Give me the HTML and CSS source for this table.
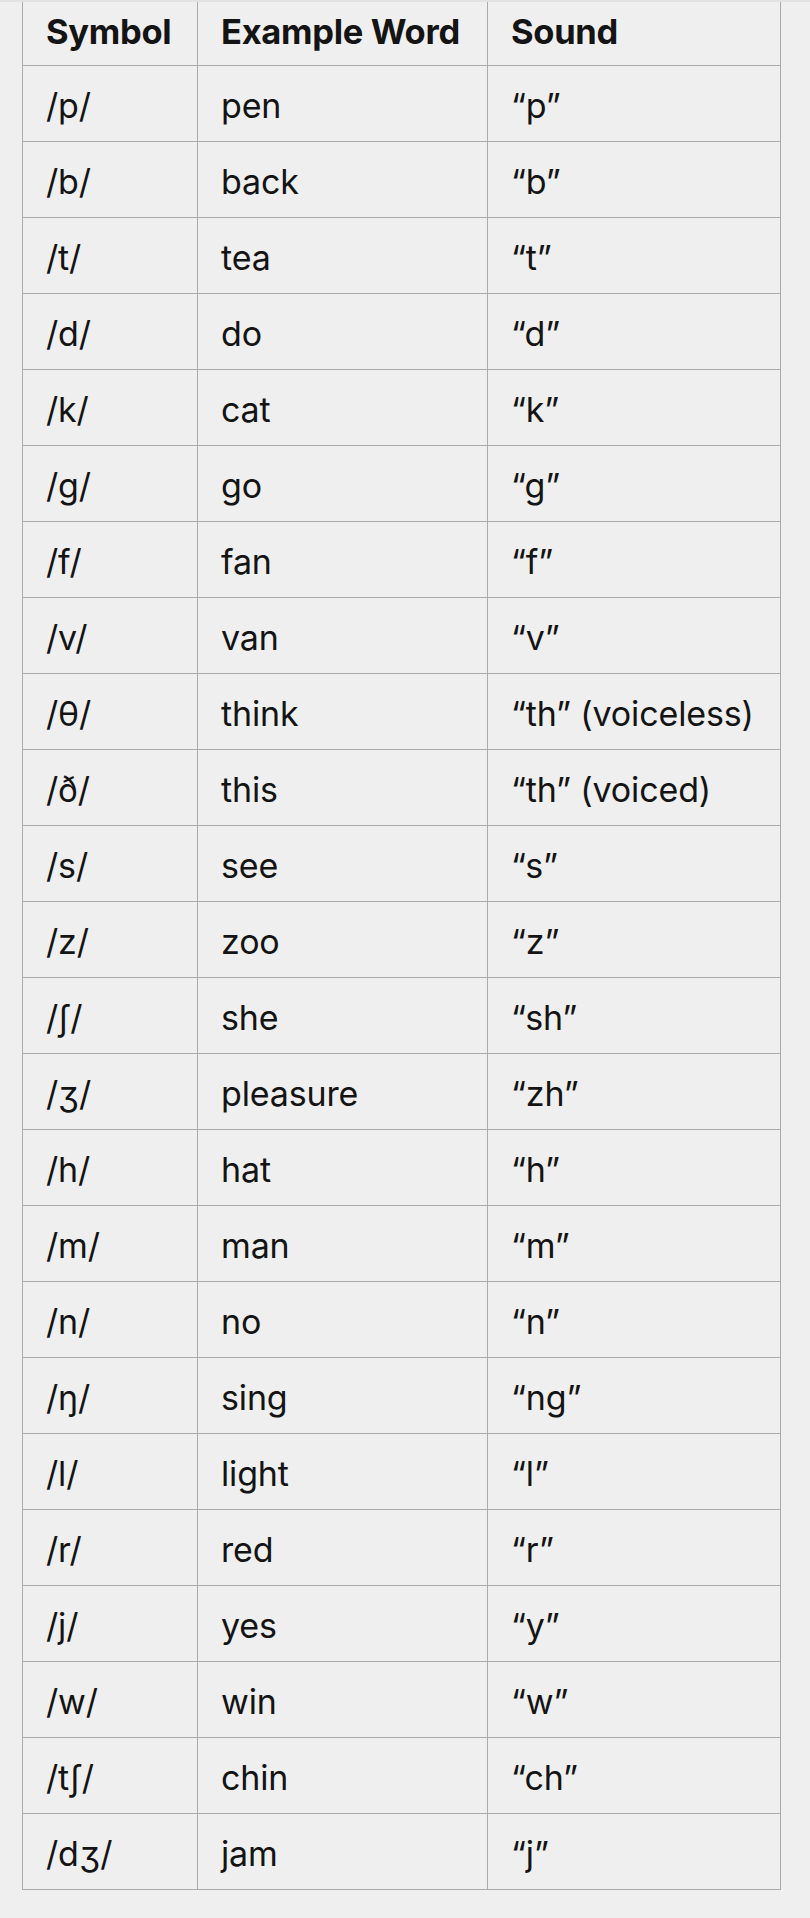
FILE: index.html
```html
<!DOCTYPE html>
<html lang="en">
<head>
<meta charset="utf-8">
<title>Consonant Sounds</title>
<link rel="stylesheet" href="styles.css">
</head>
<body>
<div class="page">
<table class="ipa">
<colgroup><col class="c1"><col class="c2"><col class="c3"></colgroup>
<thead>
<tr><th>Symbol</th><th>Example Word</th><th>Sound</th></tr>
</thead>
<tbody>
<tr><td>/p/</td><td>pen</td><td>“p”</td></tr>
<tr><td>/b/</td><td>back</td><td>“b”</td></tr>
<tr><td>/t/</td><td>tea</td><td>“t”</td></tr>
<tr><td>/d/</td><td>do</td><td>“d”</td></tr>
<tr><td>/k/</td><td>cat</td><td>“k”</td></tr>
<tr><td>/g/</td><td>go</td><td>“g”</td></tr>
<tr><td>/f/</td><td>fan</td><td>“f”</td></tr>
<tr><td>/v/</td><td>van</td><td>“v”</td></tr>
<tr><td>/θ/</td><td>think</td><td>“th” (voiceless)</td></tr>
<tr><td>/ð/</td><td>this</td><td>“th” (voiced)</td></tr>
<tr><td>/s/</td><td>see</td><td>“s”</td></tr>
<tr><td>/z/</td><td>zoo</td><td>“z”</td></tr>
<tr><td>/ʃ/</td><td>she</td><td>“sh”</td></tr>
<tr><td>/ʒ/</td><td>pleasure</td><td>“zh”</td></tr>
<tr><td>/h/</td><td>hat</td><td>“h”</td></tr>
<tr><td>/m/</td><td>man</td><td>“m”</td></tr>
<tr><td>/n/</td><td>no</td><td>“n”</td></tr>
<tr><td>/ŋ/</td><td>sing</td><td>“ng”</td></tr>
<tr><td>/l/</td><td>light</td><td>“l”</td></tr>
<tr><td>/r/</td><td>red</td><td>“r”</td></tr>
<tr><td>/j/</td><td>yes</td><td>“y”</td></tr>
<tr><td>/w/</td><td>win</td><td>“w”</td></tr>
<tr><td>/tʃ/</td><td>chin</td><td>“ch”</td></tr>
<tr><td>/dʒ/</td><td>jam</td><td>“j”</td></tr>
</tbody>
</table>
</div>
</body>
</html>
```

FILE: styles.css
```css
html, body {
  margin: 0;
  padding: 0;
}
body {
  background: #efefef;
  font-family: Inter, "Noto Sans", "DejaVu Sans", sans-serif;
  color: #141414;
}
.page {
  border-top: 2px solid #e2e2e2;
  padding: 0 30px 0 22px;
}
.ipa {
  width: 758px;
  border-collapse: collapse;
  table-layout: fixed;
}
.c1 { width: 175px; }
.c2 { width: 290px; }
.c3 { width: 293px; }
.ipa th,
.ipa td {
  border: 1px solid #ababab;
  text-align: left;
  padding: 0 0 0 23px;
  white-space: nowrap;
}
.ipa thead tr:first-child th {
  border-top: none;
}
.ipa th {
  font-size: 34.5px;
  font-weight: 700;
  height: 63.5px;
  vertical-align: top;
  padding-top: 9px;
  box-sizing: border-box;
  letter-spacing: -0.3px;
}
.ipa td {
  font-size: 34px;
  height: 76px;
  vertical-align: middle;
  padding-top: 3px;
  box-sizing: border-box;
  font-weight: 400;
  letter-spacing: -0.15px;
}
```
